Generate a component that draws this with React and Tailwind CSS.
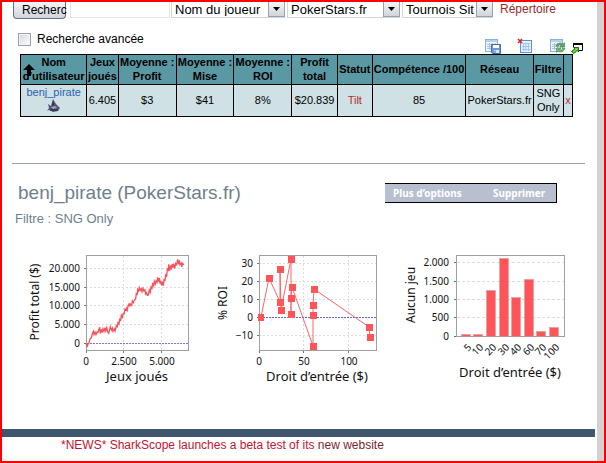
import { useState } from "react";

const columns = [
    { label: "Nom d'utilisateur", width: "w-[66px]" },
    { label: "Jeux joués", width: "w-[31px]" },
    { label: "Moyenne : Profit", width: "w-[58px]" },
    { label: "Moyenne : Mise", width: "w-[57px]" },
    { label: "Moyenne : ROI", width: "w-[58px]" },
    { label: "Profit total", width: "w-[45px]" },
    { label: "Statut", width: "w-[35px]" },
    { label: "Compétence /100", width: "w-[93px]" },
    { label: "Réseau", width: "w-[67px]" },
    { label: "Filtre", width: "w-[30px]" },
    { label: "", width: "w-[9px]" },
];

const profitPath =
    "M199 310L201 321L204 312L207 309L210 297L214 293L217 282L220 274L222 284L225 276L228 284L231 276L234 277L237 267L239 262L241 280L244 268L246 278L249 266L252 274L255 263L257 272L260 263L263 276L266 280L269 268L271 260L274 270L277 264L279 274L283 267L285 273L289 257L292 260L294 248L297 252L299 238L302 241L304 226L307 232L309 222L312 222L315 207L318 210L320 205L322 210L324 197L327 192L329 200L331 192L335 196L337 183L340 188L343 181L347 176L349 160L352 162L353 148L356 153L358 143L361 151L364 146L366 155L369 145L372 153L375 150L377 162L380 158L382 166L385 165L388 150L391 157L393 141L396 145L398 129L401 137L403 124L406 132L408 123L411 127L413 112L415 125L418 114L420 131L422 123L425 136L427 125L430 137L432 119L435 121L437 105L440 108L442 88L445 91L446 73L449 92L452 76L454 88L457 72L459 83L461 71L464 85L467 70L470 74L473 58L476 72L478 61L480 74L484 70L485 81L488 70L491 75";

const roiPoints = [
    [56, 77], [64, 38], [75, 62], [75, 29], [76, 70], [86, 19], [86, 74],
    [86, 58], [87, 47], [108, 106], [108, 75], [108, 65], [109, 49], [164, 87], [165, 97],
];

const bars = [
    { label: "5", x: 66, y: 94 },
    { label: "10", x: 78, y: 94 },
    { label: "20", x: 91, y: 50 },
    { label: "30", x: 104, y: 18 },
    { label: "40", x: 116, y: 57 },
    { label: "60", x: 129, y: 39 },
    { label: "70", x: 141, y: 91 },
    { label: "100", x: 154, y: 87 },
];

function Dropdown({ label, value, className }){
    return(
        <div className={`relative h-4 overflow-hidden border-b border-l border-gray-300 ${className}`}>
            <select
                aria-label={label}
                defaultValue={value}
                className="block h-[15px] w-full appearance-none bg-white pl-[3px] pr-4 text-[13px] leading-[13px] text-black outline-none"
            >
                <option>{value}</option>
            </select>
            <span className="pointer-events-none absolute right-0 top-0 flex h-[15px] w-[17px] items-center justify-center border border-t-0 border-gray-400 bg-gradient-to-b from-gray-100 to-gray-300">
                <svg viewBox="0 0 7 4" className="h-1 w-[7px]"><path d="M0 0H7L3.5 4Z" fill="#000" /></svg>
            </span>
        </div>
    )
}

function SheetIcon(){
    return(
        <>
            <rect x="1.5" y="1.5" width="12" height="12" fill="#eef5fd" stroke="#8db0dc" />
            <path d="M2 3H13" stroke="#b7d0ef" strokeWidth="2" />
            <path d="M3 6.5H12M3 8.5H12M3 10.5H12M5.5 5V12M8.5 5V12M11.5 5V12" stroke="#a9c3e4" />
        </>
    )
}

function Toolbar(){
    return(
        <div className="flex items-end">
            <button type="button" aria-label="Enregistrer" className="mr-4">
                <svg viewBox="0 0 17 16" className="h-4 w-[17px]">
                    <SheetIcon />
                    <path d="M7.5 6.5H16.5V15.5H8.5L7.5 14.5Z" fill="#6f9cd0" stroke="#3f6fa8" />
                    <path d="M9 7H15V10H9Z" fill="#fff" />
                    <path d="M10 12H15V15H10Z" fill="#dbe8f6" />
                    <path d="M11 12.5V15" stroke="#3f6fa8" />
                </svg>
            </button>
            <button type="button" aria-label="Effacer" className="mr-4">
                <svg viewBox="0 0 16 16" className="h-4 w-4">
                    <rect x="3.5" y="2.5" width="11" height="12" fill="#e6f1fd" stroke="#5f8fd0" />
                    <path d="M5 5.5H13M5 8.5H13M5 11.5H13M6.5 5V13M9 5V13M11.5 5V13" stroke="#a5c3ea" />
                    <path d="M1 1L5 5M5 1L1 5" stroke="#d32222" strokeWidth="1.5" />
                </svg>
            </button>
            <button type="button" aria-label="Actualiser" className="mr-[5px]">
                <svg viewBox="0 0 17 16" className="h-4 w-[17px]">
                    <SheetIcon />
                    <path d="M7 8C8 5 12 4 14 6L15.5 4.5V9H11L12.5 7.5C11 6.5 9.5 7 9 8.5Z" fill="#58a858" stroke="#397d3e" strokeWidth=".5" />
                    <path d="M16 10C15 14 11 15 9 13L7.5 14.5V10H12L10.5 11.5C12 12.5 13.5 12 14 10Z" fill="#78bd6d" stroke="#397d3e" strokeWidth=".5" />
                </svg>
            </button>
            <button type="button" aria-label="Ouvrir dans une fenêtre">
                <svg viewBox="0 0 12 12" className="h-3 w-3">
                    <path d="M2.5 5V1.5H11.5V8.5H8" fill="#fff" stroke="#000" />
                    <path d="M2 2H12" stroke="#000" strokeWidth="2" />
                    <path d="M2.5 5.5H7.5V10L6 8.5L3 11.5L.5 9.5L4 6.8Z" fill="#66d334" stroke="#23640e" />
                </svg>
            </button>
        </div>
    )
}

function ResultsTable(){
    const cell = "border border-black p-0 pb-px";

    return(
        <table className="table-fixed w-[553px] border-collapse text-center text-[11px] leading-[14px] text-black">
            <thead>
                <tr className="h-[30px] bg-[#5a99a4]">
                    {columns.map((column, index) => (
                        <th key={index} scope="col" className={`relative font-bold ${cell} ${column.width}`}>
                            {column.label}
                            {index === 0 && (
                                <svg viewBox="0 0 12 12" className="absolute left-[2px] top-[9px] h-3 w-3">
                                    <path d="M6 0L12 6H8V12H4V6H0Z" fill="#000" />
                                </svg>
                            )}
                        </th>
                    ))}
                </tr>
            </thead>
            <tbody>
                <tr className="h-8 bg-[#cfe1e5]">
                    <td className={`align-top ${cell}`}>
                        <a href="#joueur" className="block text-[#2a62b0]">benj_pirate</a>
                        <svg viewBox="0 0 14 14" className="mx-auto h-[14px] w-[14px]">
                            <path d="M6 0L9 5L13 9L11 12L6 13L2 11L0 12L2 9L1 5L4 7Z" fill="#515774" />
                            <path d="M6 1L7 6L5 7Z" fill="#262b45" />
                            <path d="M4 8L8 7L10 9L6 10Z" fill="#9ca3bd" />
                            <path d="M3 11H11" stroke="#23263a" />
                        </svg>
                    </td>
                    <td className={cell}>6.405</td>
                    <td className={cell}>$3</td>
                    <td className={cell}>$41</td>
                    <td className={cell}>8%</td>
                    <td className={cell}>$20.839</td>
                    <td className={cell}><a href="#tilt" className="text-[#b03030]">Tilt</a></td>
                    <td className={cell}>85</td>
                    <td className={cell}>PokerStars.fr</td>
                    <td className={cell}>SNG Only</td>
                    <td className={cell}><button type="button" className="text-[#b03030]">x</button></td>
                </tr>
            </tbody>
        </table>
    )
}

function ProfitChart(){
    return(
        <svg viewBox="0 0 185 150" className="h-[150px] w-[185px] font-['Noto_Sans',sans-serif]" fill="#111">
            <path d="M66 28.5H168M66 47.5H168M66 65.5H168M66 84.5H168M103.5 16V110M141.5 16V110" stroke="#dcdcdc" strokeDasharray="2 2" />
            <rect x="66.5" y="15.5" width="102" height="95" fill="none" stroke="#a0a0a0" />
            <path d="M64 28.5H66M64 47.5H66M64 65.5H66M64 84.5H66M64 103.5H66M66.5 111V113M103.5 111V113M141.5 111V113" stroke="#777" />
            <path d="M67 103.5H168" stroke="#7a78dc" strokeDasharray="2 1" />
            <path d={profitPath} transform="scale(.33333)" fill="none" stroke="#f8525a" strokeWidth="4" />
            <g fontSize="10" textAnchor="end">
                <text x="60" y="32">20.000</text>
                <text x="60" y="51">15.000</text>
                <text x="60" y="69">10.000</text>
                <text x="60" y="88">5.000</text>
                <text x="60" y="107">0</text>
            </g>
            <g fontSize="10" textAnchor="middle">
                <text x="66" y="125">0</text>
                <text x="104" y="125">2.500</text>
                <text x="142" y="125">5.000</text>
            </g>
            <text x="117" y="141" fontSize="13" textAnchor="middle">Jeux joués</text>
            <text transform="translate(19 62) rotate(-90)" fontSize="12" textAnchor="middle">Profit total ($)</text>
        </svg>
    )
}

function RoiChart(){
    return(
        <svg viewBox="0 0 190 150" className="h-[150px] w-[190px] font-['Noto_Sans',sans-serif]" fill="#111">
            <path d="M54 23.5H171M54 41.5H171M54 59.5H171M54 95.5H171M98.5 16V110M143.5 16V110" stroke="#dcdcdc" strokeDasharray="2 2" />
            <rect x="54.5" y="15.5" width="117" height="95" fill="none" stroke="#a0a0a0" />
            <path d="M52 23.5H54M52 41.5H54M52 59.5H54M52 77.5H54M52 95.5H54M54.5 111V113M98.5 111V113M143.5 111V113" stroke="#777" />
            <path d="M55 77.5H171" stroke="#6664d6" strokeDasharray="2 1" />
            <polyline points={roiPoints.join(" ")} fill="none" stroke="#f8666c" />
            {roiPoints.map(([x, y]) => (
                <rect key={`${x}-${y}`} x={x - 3} y={y - 3} width={x < 60 ? 6 : 7} height="7" fill="#ff5558" />
            ))}
            <g fontSize="10" textAnchor="end">
                <text x="48" y="27">30</text>
                <text x="48" y="45">20</text>
                <text x="48" y="63">10</text>
                <text x="48" y="81">0</text>
                <text x="48" y="99">−10</text>
            </g>
            <g fontSize="10" textAnchor="middle">
                <text x="54" y="125">0</text>
                <text x="99" y="125">50</text>
                <text x="144" y="125">100</text>
            </g>
            <text x="112" y="141" fontSize="13" textAnchor="middle">Droit d’entrée ($)</text>
            <text transform="translate(22 63) rotate(-90)" fontSize="12" textAnchor="middle">% ROI</text>
        </svg>
    )
}

function GamesChart(){
    return(
        <svg viewBox="0 0 180 150" className="h-[150px] w-[180px] font-['Noto_Sans',sans-serif]" fill="#111">
            <path d="M62 22.5H169M62 41.5H169M62 59.5H169M62 77.5H169" stroke="#dcdcdc" strokeDasharray="3 2" />
            <rect x="61.5" y="15.5" width="108" height="81" fill="none" stroke="#a0a0a0" />
            <path d="M59 22.5H61M59 41.5H61M59 59.5H61M59 77.5H61M59 96.5H61" stroke="#777" />
            {bars.map((bar) => (
                <g key={bar.label}>
                    <rect x={bar.x + 0.5} y={bar.y + 0.5} width="9" height={96 - bar.y} fill="#ff5558" stroke="#c4a0a0" strokeWidth=".5" />
                    <text transform={`translate(${bar.x + 11} 108) rotate(-45)`} fontSize="10" textAnchor="end">{bar.label}</text>
                </g>
            ))}
            <g fontSize="10" textAnchor="end">
                <text x="54" y="26">2.000</text>
                <text x="54" y="45">1.500</text>
                <text x="54" y="63">1.000</text>
                <text x="54" y="81">500</text>
                <text x="54" y="100">0</text>
            </g>
            <text x="115" y="137" fontSize="13" textAnchor="middle">Droit d’entrée ($)</text>
            <text transform="translate(20 55) rotate(-90)" fontSize="12" textAnchor="middle">Aucun jeu</text>
        </svg>
    )
}

function App(){

    const [advanced, setAdvanced] = useState(false);
    const [search, setSearch] = useState("");

    return(
        <div className="flex min-h-screen border-2 border-[#ff0000] bg-white font-['Liberation_Sans',Arial,sans-serif]">
            <main className="min-w-0 grow">
                <form className="flex items-start pl-[11px]" onSubmit={(event) => event.preventDefault()}>
                    <button
                        type="submit"
                        className="mr-1 h-[17px] w-[53px] whitespace-nowrap rounded-b-sm border border-t-0 border-gray-500 bg-gradient-to-b from-gray-100 to-gray-300 pl-2 text-left text-xs leading-3 text-black"
                    >
                        Recherc
                    </button>
                    <input
                        type="text"
                        aria-label="Recherche"
                        value={search}
                        onChange={(event) => setSearch(event.target.value)}
                        className="mr-px h-4 w-[100px] border border-t-0 border-gray-200 bg-white px-1 text-xs outline-none"
                    />
                    <Dropdown label="Type de recherche" value="Nom du joueur" className="w-[114px]" />
                    <Dropdown label="Réseau" value="PokerStars.fr" className="ml-[2px] w-[113px]" />
                    <Dropdown label="Tournois" value="Tournois Sit & Go" className="ml-[2px] w-[91px]" />
                    <a href="#repertoire" className="ml-[7px] pt-px text-xs leading-3 text-[#9c2a2a]">Répertoire</a>
                </form>

                <div className="flex h-[35px] items-end justify-between pl-4 pr-[14px]">
                    <label className="mb-[7px] flex items-center gap-[6px] text-xs leading-4 text-black">
                        <input
                            type="checkbox"
                            checked={advanced}
                            onChange={() => setAdvanced(!advanced)}
                            className="h-[13px] w-[13px] appearance-none border border-gray-400 bg-gradient-to-br from-gray-300 to-white shadow-[inset_0_0_0_1px_#f4f4f4] checked:bg-gray-600"
                        />
                        Recherche avancée
                    </label>
                    <Toolbar />
                </div>

                <div className="pl-[18px]">
                    <ResultsTable />
                </div>

                <hr className="ml-[10px] mr-3 mt-[46px] border-gray-400" />

                <section className="mt-4 pl-[13px]">
                    <div className="flex items-start justify-between pr-10">
                        <h1 className="pl-[3px] pt-px text-[19px] leading-6 text-[#6f7f8c]">benj_pirate (PokerStars.fr)</h1>
                        <nav className="mt-[3px] flex h-5 w-[172px] items-center border-y border-r border-black bg-[#b8bfcf] font-['Noto_Sans',sans-serif] text-[10px] font-bold text-white">
                            <a href="#options" className="w-[100px] pl-2">Plus d’options</a>
                            <a href="#supprimer" className="pl-2">Supprimer</a>
                        </nav>
                    </div>
                    <p className="mt-[6px] text-[13px] leading-4 text-[#6f7f8c]">Filtre : SNG Only</p>
                </section>

                <div className="mt-[13px] flex pl-[18px]">
                    <ProfitChart />
                    <RoiChart />
                    <GamesChart />
                </div>

                <footer className="mt-[39px]">
                    <div className="mr-[2px] h-2 bg-[#3f566e]" />
                    <p className="pl-[59px] text-xs leading-4 text-[#c41230]">
                        *NEWS* SharkScope launches a beta test of its <a href="#site" className="text-[#7d1f2a]">new website</a>
                    </p>
                </footer>
            </main>
            <div className="w-[7px] shrink-0 bg-[#d2d2d2]" />
        </div>
    )
}
export default App;
